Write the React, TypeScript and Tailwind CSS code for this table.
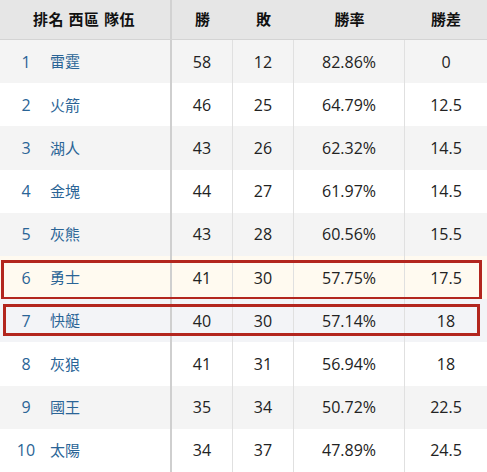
import React from "react";

const rows = [
  ["1", "雷霆", "58", "12", "82.86%", "0"],
  ["2", "火箭", "46", "25", "64.79%", "12.5"],
  ["3", "湖人", "43", "26", "62.32%", "14.5"],
  ["4", "金塊", "44", "27", "61.97%", "14.5"],
  ["5", "灰熊", "43", "28", "60.56%", "15.5"],
  ["6", "勇士", "41", "30", "57.75%", "17.5"],
  ["7", "快艇", "40", "30", "57.14%", "18"],
  ["8", "灰狼", "41", "31", "56.94%", "18"],
  ["9", "國王", "35", "34", "50.72%", "22.5"],
  ["10", "太陽", "34", "37", "47.89%", "24.5"],
];

const grid = "grid grid-cols-[172px_61px_61px_111px_82px]";

export default function App() {
  return (
    <div
      className="w-[487px] h-[472px] bg-white overflow-hidden text-[16px]"
      style={{ fontFamily: '"Open Sans", "Noto Sans CJK TC", sans-serif' }}
    >
      <div className={`${grid} h-[40px] bg-[#e6e6e6] border-b border-[#d4d4d4] font-bold text-[#111] text-[15px]`}>
        <div className="flex items-center justify-center border-r-2 border-[#d2d2d2] pr-[2px] tracking-[0.5px]">排名 西區 隊伍</div>
        <div className="flex items-center justify-center">勝</div>
        <div className="flex items-center justify-center">敗</div>
        <div className="flex items-center justify-center">勝率</div>
        <div className="flex items-center justify-center">勝差</div>
      </div>
      {rows.map((r, i) => {
        const bg = i === 5 ? "bg-[#fffaf0]" : i === 6 ? "bg-[#f3f4f7]" : i % 2 === 0 ? "bg-[#f4f4f4]" : "bg-white";
        return (
          <div key={i} className={`${grid} relative h-[43.2px] ${bg} text-[#222]`}>
            <div className="flex items-center border-r-2 border-[#cfcfcf] text-[#2a6496]">
              <span className="w-[38px] pl-[14px] text-center">{r[0]}</span>
              <span className="ml-[12px] text-[15px]">{r[1]}</span>
            </div>
            <div className="flex items-center justify-center border-r border-[#e0e0e0]">{r[2]}</div>
            <div className="flex items-center justify-center border-r border-[#e0e0e0]">{r[3]}</div>
            <div className="flex items-center justify-center border-r border-[#e0e0e0]">{r[4]}</div>
            <div className="flex items-center justify-center">{r[5]}</div>
            {i === 5 && (
              <div className="absolute left-[1px] right-[5px] top-[4px] bottom-[-1px] border-[3px] border-[#b3261e]" />
            )}
            {i === 6 && (
              <div className="absolute left-[3px] right-[7px] top-[5px] bottom-[6px] border-[3px] border-[#b3261e]" />
            )}
          </div>
        );
      })}
    </div>
  );
}
